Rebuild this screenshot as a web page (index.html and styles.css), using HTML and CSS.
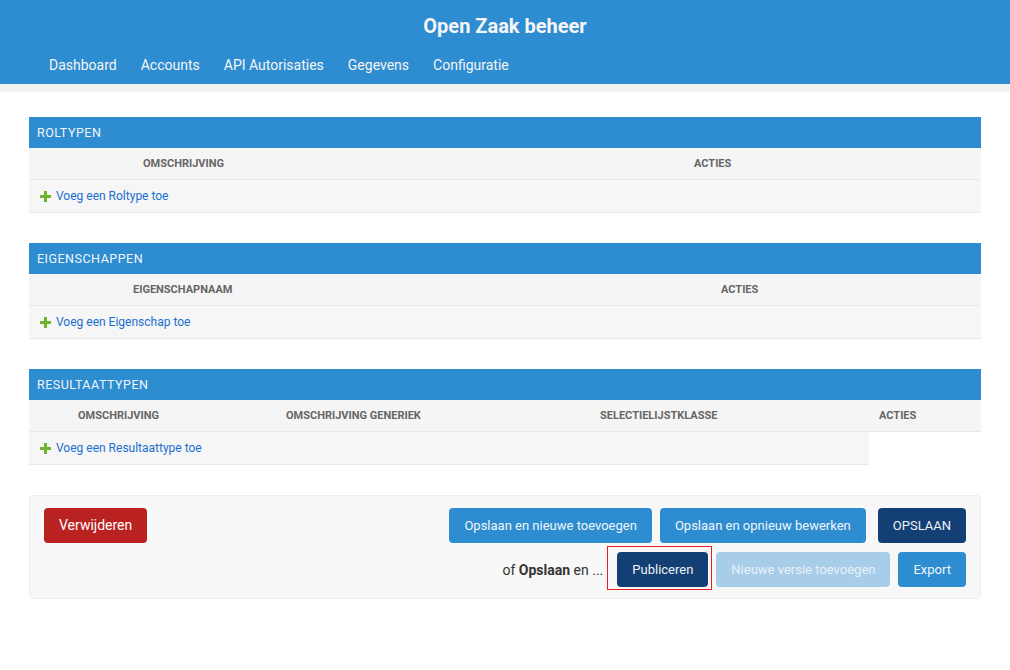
FILE: index.html
```html
<!DOCTYPE html>
<html lang="nl">
<head>
  <meta charset="UTF-8">
  <title>Open Zaak beheer</title>
  <link rel="stylesheet" href="styles.css">
</head>
<body>

  <!-- Kop met navigatie -->
  <div class="header">
    <h1 class="branding">Open Zaak beheer</h1>
    <ul class="nav">
      <li><a href="#">Dashboard</a></li>
      <li><a href="#">Accounts</a></li>
      <li><a href="#">API Autorisaties</a></li>
      <li><a href="#">Gegevens</a></li>
      <li><a href="#">Configuratie</a></li>
    </ul>
  </div>
  <div class="breadcrumbs"></div>

  <div class="content">

    <!-- Roltypen -->
    <div class="inline-group">
      <h2>Roltypen</h2>
      <table class="cols-rol">
        <colgroup><col class="c0"><col class="c1"><col></colgroup>
        <thead>
          <tr><th></th><th>Omschrijving</th><th>Acties</th></tr>
        </thead>
        <tbody>
          <tr class="add-row"><td colspan="3"><a href="#"><span class="plus"></span>Voeg een Roltype toe</a></td></tr>
        </tbody>
      </table>
    </div>

    <!-- Eigenschappen -->
    <div class="inline-group">
      <h2>Eigenschappen</h2>
      <table class="cols-eig">
        <colgroup><col class="c0"><col class="c1"><col></colgroup>
        <thead>
          <tr><th></th><th>Eigenschapnaam</th><th>Acties</th></tr>
        </thead>
        <tbody>
          <tr class="add-row"><td colspan="3"><a href="#"><span class="plus"></span>Voeg een Eigenschap toe</a></td></tr>
        </tbody>
      </table>
    </div>

    <!-- Resultaattypen -->
    <div class="inline-group">
      <h2>Resultaattypen</h2>
      <table class="cols-res">
        <colgroup><col class="c0"><col class="c1"><col class="c2"><col class="c3"><col></colgroup>
        <thead>
          <tr><th></th><th>Omschrijving</th><th>Omschrijving generiek</th><th>Selectielijstklasse</th><th>Acties</th></tr>
        </thead>
        <tbody>
          <tr class="add-row"><td colspan="4"><a href="#"><span class="plus"></span>Voeg een Resultaattype toe</a></td><td class="empty"></td></tr>
        </tbody>
      </table>
    </div>

    <!-- Opslaan -->
    <div class="submit-row">
      <a href="#" class="btn btn-delete">Verwijderen</a>
      <div class="submit-right">
        <div class="submit-line">
          <a href="#" class="btn">Opslaan en nieuwe toevoegen</a>
          <a href="#" class="btn">Opslaan en opnieuw bewerken</a>
          <a href="#" class="btn btn-default">OPSLAAN</a>
        </div>
        <div class="submit-line">
          <span class="or-text">of <b>Opslaan</b> en ...</span>
          <span class="highlight"><a href="#" class="btn btn-default">Publiceren</a></span>
          <a href="#" class="btn btn-disabled">Nieuwe versie toevoegen</a>
          <a href="#" class="btn">Export</a>
        </div>
      </div>
    </div>

  </div>

</body>
</html>
```

FILE: styles.css
```css
body {
  margin: 0;
  font-family: Roboto, 'Liberation Sans', sans-serif;
  background-color: #fff;
  color: #333;
}

a {
  text-decoration: none;
}

.header {
  background-color: #2e8cd0;
  height: 84px;
  color: #f5f5f5;
}

.branding {
  margin: 0;
  padding-top: 13px;
  height: 27px;
  text-align: center;
  font-size: 20px;
  font-weight: 700;
  line-height: 27px;
  color: #f5f5f5;
}

.nav {
  list-style: none;
  margin: 0;
  padding: 14px 0 0 37px;
  display: flex;
}

.nav li a {
  display: block;
  padding: 0 12px;
  font-size: 14px;
  line-height: 22px;
  color: #f5f5f5;
}

.breadcrumbs {
  height: 8px;
  background-color: #f2f2f2;
}

.content {
  padding: 25px 29px 0 29px;
}

.inline-group {
  margin-bottom: 30px;
}

.inline-group h2 {
  margin: 0;
  height: 31px;
  padding: 0 8px;
  background-color: #2e8cd0;
  color: #f0f6fb;
  font-size: 12.5px;
  font-weight: 400;
  line-height: 31px;
  text-transform: uppercase;
  letter-spacing: 0.5px;
}

table {
  width: 100%;
  border-collapse: collapse;
  table-layout: fixed;
}

th {
  height: 31px;
  padding: 0 10px;
  background-color: #f5f5f5;
  border-bottom: 1px solid #e8e8e8;
  text-align: left;
  font-size: 11px;
  font-weight: 700;
  color: #666;
  text-transform: uppercase;
}

td {
  height: 32px;
  padding: 0 10px;
  background-color: #f6f6f6;
  border-bottom: 1px solid #e8e8e8;
}

td.empty {
  background-color: #fff;
  border-bottom: none;
}

.add-row a {
  font-size: 12px;
  color: #1a6fd0;
  display: flex;
  align-items: center;
}

.plus {
  position: relative;
  display: inline-block;
  width: 11px;
  height: 11px;
  margin: 0 5px 0 1px;
}

.plus::before,
.plus::after {
  content: "";
  position: absolute;
  background-color: #6cb52d;
}

.plus::before {
  left: 0;
  top: 4px;
  width: 11px;
  height: 3px;
}

.plus::after {
  left: 4px;
  top: 0;
  width: 3px;
  height: 11px;
}

/* kolombreedtes */
.cols-rol .c0 { width: 104px; }
.cols-rol .c1 { width: 551px; }
.cols-eig .c0 { width: 94px; }
.cols-eig .c1 { width: 588px; }
.cols-res .c0 { width: 39px; }
.cols-res .c1 { width: 208px; }
.cols-res .c2 { width: 314px; }
.cols-res .c3 { width: 279px; }

.cols-rol th:first-child,
.cols-eig th:first-child,
.cols-res th:first-child {
  padding: 0;
}

.submit-row {
  display: flex;
  justify-content: space-between;
  align-items: flex-start;
  padding: 12px 14px 11px 14px;
  background-color: #f8f8f8;
  border: 1px solid #eee;
  border-radius: 4px;
}

.submit-right {
  display: flex;
  flex-direction: column;
  align-items: flex-end;
  gap: 9px;
}

.submit-line {
  display: flex;
  align-items: center;
  gap: 8px;
}

.btn {
  display: inline-block;
  height: 35px;
  padding: 0 15px;
  line-height: 35px;
  font-size: 13px;
  color: #f0f6fb;
  background-color: #2e8cd0;
  border-radius: 4px;
  box-sizing: border-box;
}

.btn-delete {
  background-color: #ba2121;
  font-size: 14px;
  color: #fff;
}

.btn-default {
  background-color: #133f74;
  color: #eef2f7;
}

.submit-line .btn-default:last-child {
  margin-left: 4px;
}

.btn-disabled {
  background-color: #a8cde9;
  color: #e8f1f9;
}

.or-text {
  font-size: 14px;
  color: #333;
}

.highlight {
  display: inline-block;
  padding: 5px 3px 2px 5px;
  border: 1px solid #e8201f;
  margin: -6px -4px -3px -4px;
}
```
